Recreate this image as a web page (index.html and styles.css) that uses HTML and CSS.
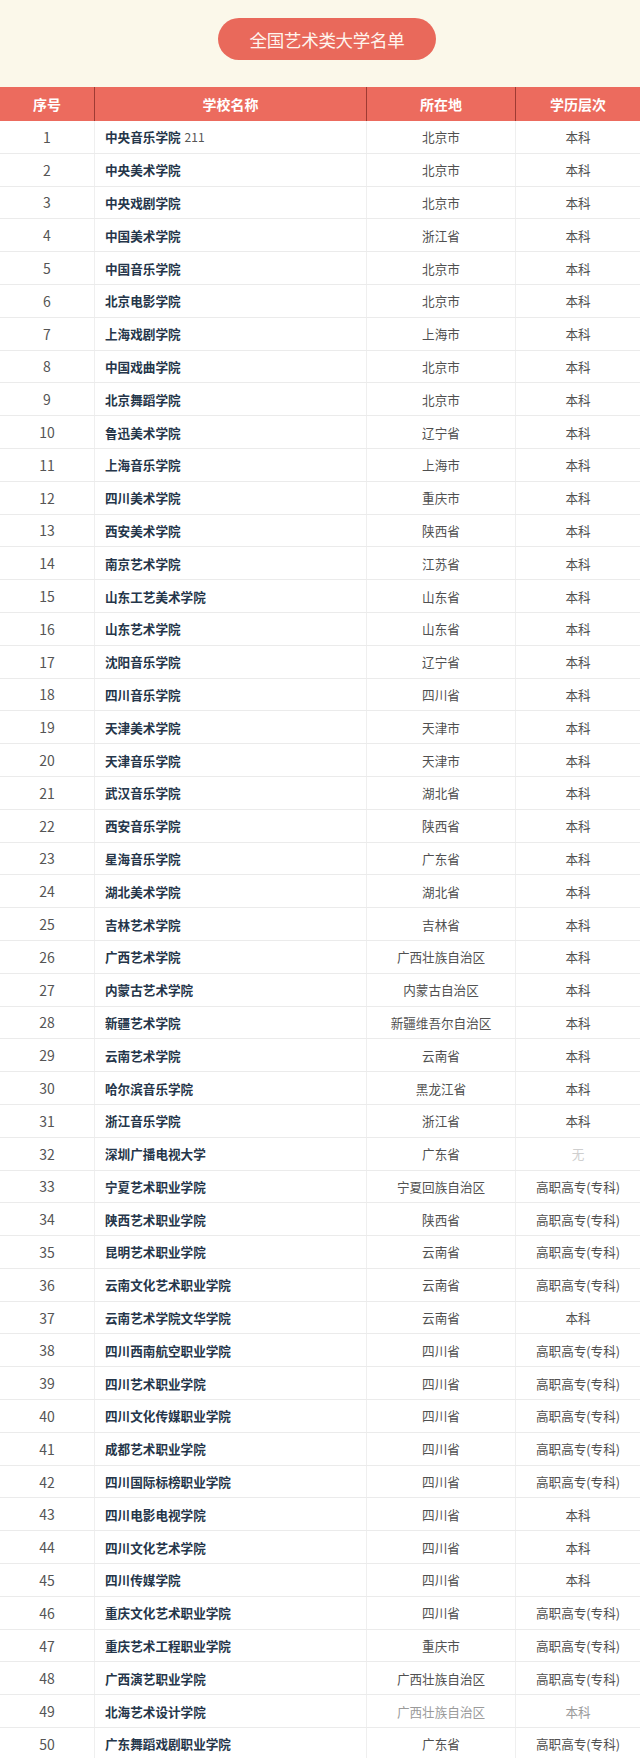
FILE: index.html
```html
<!DOCTYPE html>
<html lang="zh">
<head>
<meta charset="utf-8">
<title>全国艺术类大学名单</title>
<link rel="stylesheet" href="styles.css">
</head>
<body>
<div class="page">
  <header class="banner">
    <div class="pill">全国艺术类大学名单</div>
  </header>
  <div class="table">
    <div class="row head">
      <div class="c c1">序号</div>
      <div class="c c2">学校名称</div>
      <div class="c c3">所在地</div>
      <div class="c c4">学历层次</div>
    </div>
    <div class="row"><div class="c c1">1</div><div class="c c2"><b>中央音乐学院</b> <span class="tag">211</span></div><div class="c c3">北京市</div><div class="c c4">本科</div></div>
    <div class="row"><div class="c c1">2</div><div class="c c2"><b>中央美术学院</b></div><div class="c c3">北京市</div><div class="c c4">本科</div></div>
    <div class="row"><div class="c c1">3</div><div class="c c2"><b>中央戏剧学院</b></div><div class="c c3">北京市</div><div class="c c4">本科</div></div>
    <div class="row"><div class="c c1">4</div><div class="c c2"><b>中国美术学院</b></div><div class="c c3">浙江省</div><div class="c c4">本科</div></div>
    <div class="row"><div class="c c1">5</div><div class="c c2"><b>中国音乐学院</b></div><div class="c c3">北京市</div><div class="c c4">本科</div></div>
    <div class="row"><div class="c c1">6</div><div class="c c2"><b>北京电影学院</b></div><div class="c c3">北京市</div><div class="c c4">本科</div></div>
    <div class="row"><div class="c c1">7</div><div class="c c2"><b>上海戏剧学院</b></div><div class="c c3">上海市</div><div class="c c4">本科</div></div>
    <div class="row"><div class="c c1">8</div><div class="c c2"><b>中国戏曲学院</b></div><div class="c c3">北京市</div><div class="c c4">本科</div></div>
    <div class="row"><div class="c c1">9</div><div class="c c2"><b>北京舞蹈学院</b></div><div class="c c3">北京市</div><div class="c c4">本科</div></div>
    <div class="row"><div class="c c1">10</div><div class="c c2"><b>鲁迅美术学院</b></div><div class="c c3">辽宁省</div><div class="c c4">本科</div></div>
    <div class="row"><div class="c c1">11</div><div class="c c2"><b>上海音乐学院</b></div><div class="c c3">上海市</div><div class="c c4">本科</div></div>
    <div class="row"><div class="c c1">12</div><div class="c c2"><b>四川美术学院</b></div><div class="c c3">重庆市</div><div class="c c4">本科</div></div>
    <div class="row"><div class="c c1">13</div><div class="c c2"><b>西安美术学院</b></div><div class="c c3">陕西省</div><div class="c c4">本科</div></div>
    <div class="row"><div class="c c1">14</div><div class="c c2"><b>南京艺术学院</b></div><div class="c c3">江苏省</div><div class="c c4">本科</div></div>
    <div class="row"><div class="c c1">15</div><div class="c c2"><b>山东工艺美术学院</b></div><div class="c c3">山东省</div><div class="c c4">本科</div></div>
    <div class="row"><div class="c c1">16</div><div class="c c2"><b>山东艺术学院</b></div><div class="c c3">山东省</div><div class="c c4">本科</div></div>
    <div class="row"><div class="c c1">17</div><div class="c c2"><b>沈阳音乐学院</b></div><div class="c c3">辽宁省</div><div class="c c4">本科</div></div>
    <div class="row"><div class="c c1">18</div><div class="c c2"><b>四川音乐学院</b></div><div class="c c3">四川省</div><div class="c c4">本科</div></div>
    <div class="row"><div class="c c1">19</div><div class="c c2"><b>天津美术学院</b></div><div class="c c3">天津市</div><div class="c c4">本科</div></div>
    <div class="row"><div class="c c1">20</div><div class="c c2"><b>天津音乐学院</b></div><div class="c c3">天津市</div><div class="c c4">本科</div></div>
    <div class="row"><div class="c c1">21</div><div class="c c2"><b>武汉音乐学院</b></div><div class="c c3">湖北省</div><div class="c c4">本科</div></div>
    <div class="row"><div class="c c1">22</div><div class="c c2"><b>西安音乐学院</b></div><div class="c c3">陕西省</div><div class="c c4">本科</div></div>
    <div class="row"><div class="c c1">23</div><div class="c c2"><b>星海音乐学院</b></div><div class="c c3">广东省</div><div class="c c4">本科</div></div>
    <div class="row"><div class="c c1">24</div><div class="c c2"><b>湖北美术学院</b></div><div class="c c3">湖北省</div><div class="c c4">本科</div></div>
    <div class="row"><div class="c c1">25</div><div class="c c2"><b>吉林艺术学院</b></div><div class="c c3">吉林省</div><div class="c c4">本科</div></div>
    <div class="row"><div class="c c1">26</div><div class="c c2"><b>广西艺术学院</b></div><div class="c c3">广西壮族自治区</div><div class="c c4">本科</div></div>
    <div class="row"><div class="c c1">27</div><div class="c c2"><b>内蒙古艺术学院</b></div><div class="c c3">内蒙古自治区</div><div class="c c4">本科</div></div>
    <div class="row"><div class="c c1">28</div><div class="c c2"><b>新疆艺术学院</b></div><div class="c c3">新疆维吾尔自治区</div><div class="c c4">本科</div></div>
    <div class="row"><div class="c c1">29</div><div class="c c2"><b>云南艺术学院</b></div><div class="c c3">云南省</div><div class="c c4">本科</div></div>
    <div class="row"><div class="c c1">30</div><div class="c c2"><b>哈尔滨音乐学院</b></div><div class="c c3">黑龙江省</div><div class="c c4">本科</div></div>
    <div class="row"><div class="c c1">31</div><div class="c c2"><b>浙江音乐学院</b></div><div class="c c3">浙江省</div><div class="c c4">本科</div></div>
    <div class="row"><div class="c c1">32</div><div class="c c2"><b>深圳广播电视大学</b></div><div class="c c3">广东省</div><div class="c c4 none">无</div></div>
    <div class="row"><div class="c c1">33</div><div class="c c2"><b>宁夏艺术职业学院</b></div><div class="c c3">宁夏回族自治区</div><div class="c c4">高职高专(专科)</div></div>
    <div class="row"><div class="c c1">34</div><div class="c c2"><b>陕西艺术职业学院</b></div><div class="c c3">陕西省</div><div class="c c4">高职高专(专科)</div></div>
    <div class="row"><div class="c c1">35</div><div class="c c2"><b>昆明艺术职业学院</b></div><div class="c c3">云南省</div><div class="c c4">高职高专(专科)</div></div>
    <div class="row"><div class="c c1">36</div><div class="c c2"><b>云南文化艺术职业学院</b></div><div class="c c3">云南省</div><div class="c c4">高职高专(专科)</div></div>
    <div class="row"><div class="c c1">37</div><div class="c c2"><b>云南艺术学院文华学院</b></div><div class="c c3">云南省</div><div class="c c4">本科</div></div>
    <div class="row"><div class="c c1">38</div><div class="c c2"><b>四川西南航空职业学院</b></div><div class="c c3">四川省</div><div class="c c4">高职高专(专科)</div></div>
    <div class="row"><div class="c c1">39</div><div class="c c2"><b>四川艺术职业学院</b></div><div class="c c3">四川省</div><div class="c c4">高职高专(专科)</div></div>
    <div class="row"><div class="c c1">40</div><div class="c c2"><b>四川文化传媒职业学院</b></div><div class="c c3">四川省</div><div class="c c4">高职高专(专科)</div></div>
    <div class="row"><div class="c c1">41</div><div class="c c2"><b>成都艺术职业学院</b></div><div class="c c3">四川省</div><div class="c c4">高职高专(专科)</div></div>
    <div class="row"><div class="c c1">42</div><div class="c c2"><b>四川国际标榜职业学院</b></div><div class="c c3">四川省</div><div class="c c4">高职高专(专科)</div></div>
    <div class="row"><div class="c c1">43</div><div class="c c2"><b>四川电影电视学院</b></div><div class="c c3">四川省</div><div class="c c4">本科</div></div>
    <div class="row"><div class="c c1">44</div><div class="c c2"><b>四川文化艺术学院</b></div><div class="c c3">四川省</div><div class="c c4">本科</div></div>
    <div class="row"><div class="c c1">45</div><div class="c c2"><b>四川传媒学院</b></div><div class="c c3">四川省</div><div class="c c4">本科</div></div>
    <div class="row"><div class="c c1">46</div><div class="c c2"><b>重庆文化艺术职业学院</b></div><div class="c c3">四川省</div><div class="c c4">高职高专(专科)</div></div>
    <div class="row"><div class="c c1">47</div><div class="c c2"><b>重庆艺术工程职业学院</b></div><div class="c c3">重庆市</div><div class="c c4">高职高专(专科)</div></div>
    <div class="row"><div class="c c1">48</div><div class="c c2"><b>广西演艺职业学院</b></div><div class="c c3">广西壮族自治区</div><div class="c c4">高职高专(专科)</div></div>
    <div class="row"><div class="c c1">49</div><div class="c c2"><b>北海艺术设计学院</b></div><div class="c c3 faded">广西壮族自治区</div><div class="c c4 faded">本科</div></div>
    <div class="row"><div class="c c1">50</div><div class="c c2"><b>广东舞蹈戏剧职业学院</b></div><div class="c c3">广东省</div><div class="c c4">高职高专(专科)</div></div>
  </div>
</div>
</body>
</html>
```

FILE: styles.css
```css
html, body {
  margin: 0;
  padding: 0;
  background: #ffffff;
}
body {
  font-family: "Noto Sans CJK SC", "Noto Sans", sans-serif;
  color: #444444;
}
.page {
  width: 640px;
  overflow: hidden;
}
.banner {
  height: 87px;
  background: #fbf8ea;
  display: flex;
  justify-content: flex-start;
  align-items: flex-start;
}
.pill {
  margin: 18px 0 0 218px;
  width: 218px;
  height: 42px;
  border-radius: 21px;
  background: #e9695b;
  color: #fff5ee;
  font-size: 17.5px;
  font-weight: 400;
  letter-spacing: -0.3px;
  display: flex;
  align-items: center;
  justify-content: center;
}
.table {
  display: flex;
  flex-direction: column;
}
.row {
  display: grid;
  grid-template-columns: 94px 272px 149px 125px;
  height: 32.8px;
  box-sizing: border-box;
  border-bottom: 1px solid #ebebeb;
  font-size: 12.6px;
}
.row.head {
  height: 34px;
  background: #ec6b5e;
  border-bottom: none;
  color: #ffffff;
  font-weight: 700;
  font-size: 14px;
}
.c {
  display: flex;
  align-items: center;
  justify-content: center;
  border-left: 1px solid #efefef;
  white-space: nowrap;
  overflow: hidden;
}
.c1 {
  border-left: none;
  font-size: 14px;
  color: #555555;
}
.head .c {
  border-left: 1px solid #9e3b33;
}
.head .c1 {
  border-left: none;
  color: #ffffff;
}
.c2 {
  justify-content: flex-start;
  padding-left: 10px;
}
.head .c2 {
  justify-content: center;
  padding-left: 0;
}
.c2 b {
  font-weight: 700;
  color: #25364a;
}
.tag {
  margin-left: 4px;
  color: #555555;
  font-size: 12px;
}
.c3, .c4 {
  color: #505050;
}
.head .c3, .head .c4 {
  color: #ffffff;
}
.none {
  color: #cfcfcf;
}
.faded {
  color: #9a9a9a;
}
```
